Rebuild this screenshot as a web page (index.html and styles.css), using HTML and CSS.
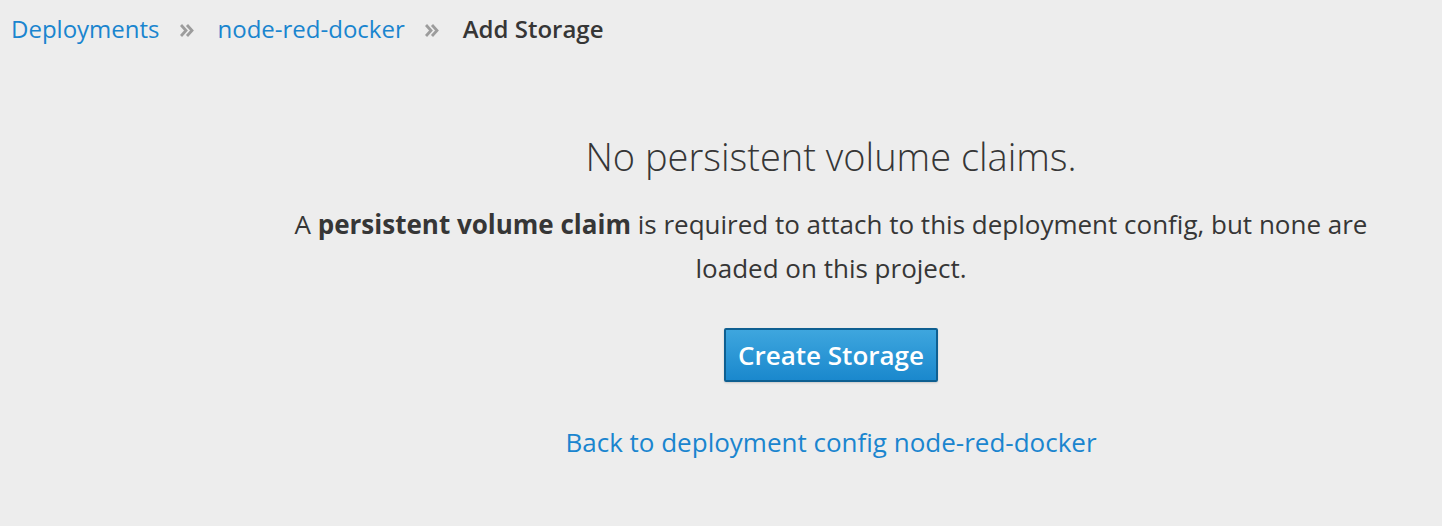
FILE: index.html
```html
<!DOCTYPE html>
<html>
<head>
  <title>Add Storage</title>
  <meta charset="UTF-8">
  <meta name="viewport" content="width=device-width, initial-scale=1.0">
  <link rel="stylesheet" href="styles.css">
</head>
<body>
  <ol class="breadcrumb">
    <li><a href="#">Deployments</a></li>
    <li class="sep"><svg width="14" height="13" viewBox="0 0 14 13"><path d="M1 1l5 5.5-5 5.5M7 1l5 5.5-5 5.5" fill="none" stroke="#9c9c9c" stroke-width="2.8"/></svg></li>
    <li><a href="#">node-red-docker</a></li>
    <li class="sep"><svg width="14" height="13" viewBox="0 0 14 13"><path d="M1 1l5 5.5-5 5.5M7 1l5 5.5-5 5.5" fill="none" stroke="#9c9c9c" stroke-width="2.8"/></svg></li>
    <li class="active">Add Storage</li>
  </ol>

  <div class="content">
    <div class="empty-state">
      <h2>No persistent volume claims.</h2>
      <p>A <strong>persistent volume claim</strong> is required to attach to this deployment config, but none are loaded on this project.</p>
      <button class="btn-primary">Create Storage</button>
      <a class="back" href="#">Back to deployment config node-red-docker</a>
    </div>
  </div>
</body>
</html>
```

FILE: styles.css
```css
body {
  margin: 0;
  background: #ededed;
  font-family: "Open Sans", Arial, sans-serif;
  color: #363636;
}
a {
  color: #1a85cf;
  text-decoration: none;
}
.breadcrumb {
  list-style: none;
  margin: 0;
  padding: 12px 11px;
  display: flex;
  align-items: center;
  gap: 19px;
  font-size: 24px;
  line-height: 34px;
}
.breadcrumb .sep {
  display: flex;
  align-items: center;
  margin: 2px 5px 0 1px;
}
.breadcrumb .active {
  font-weight: 600;
}
.content {
  padding-left: 220px;
}
.empty-state {
  max-width: 1140px;
  margin: 0 auto;
  padding-top: 72px;
  display: flex;
  flex-direction: column;
  align-items: center;
  text-align: center;
}
.empty-state h2 {
  font-weight: 300;
  font-size: 38px;
  line-height: 52px;
  margin: 0 0 20px;
}
.empty-state p {
  font-size: 26px;
  line-height: 44px;
  margin: 0 0 38px;
}
.empty-state strong {
  font-weight: 700;
}
.btn-primary {
  font-family: "Open Sans", Arial, sans-serif;
  font-size: 26px;
  font-weight: 600;
  color: #fff;
  background: linear-gradient(#3ea6de, #1a88cd);
  border: 2px solid #0e5f91;
  border-radius: 2px;
  padding: 6px 12px;
  height: 54px;
  width: 214px;
  box-shadow: 0 1px 2px rgba(0,0,0,0.15);
}
.back {
  font-size: 26px;
  line-height: 36px;
  margin-top: 42px;
}
```
